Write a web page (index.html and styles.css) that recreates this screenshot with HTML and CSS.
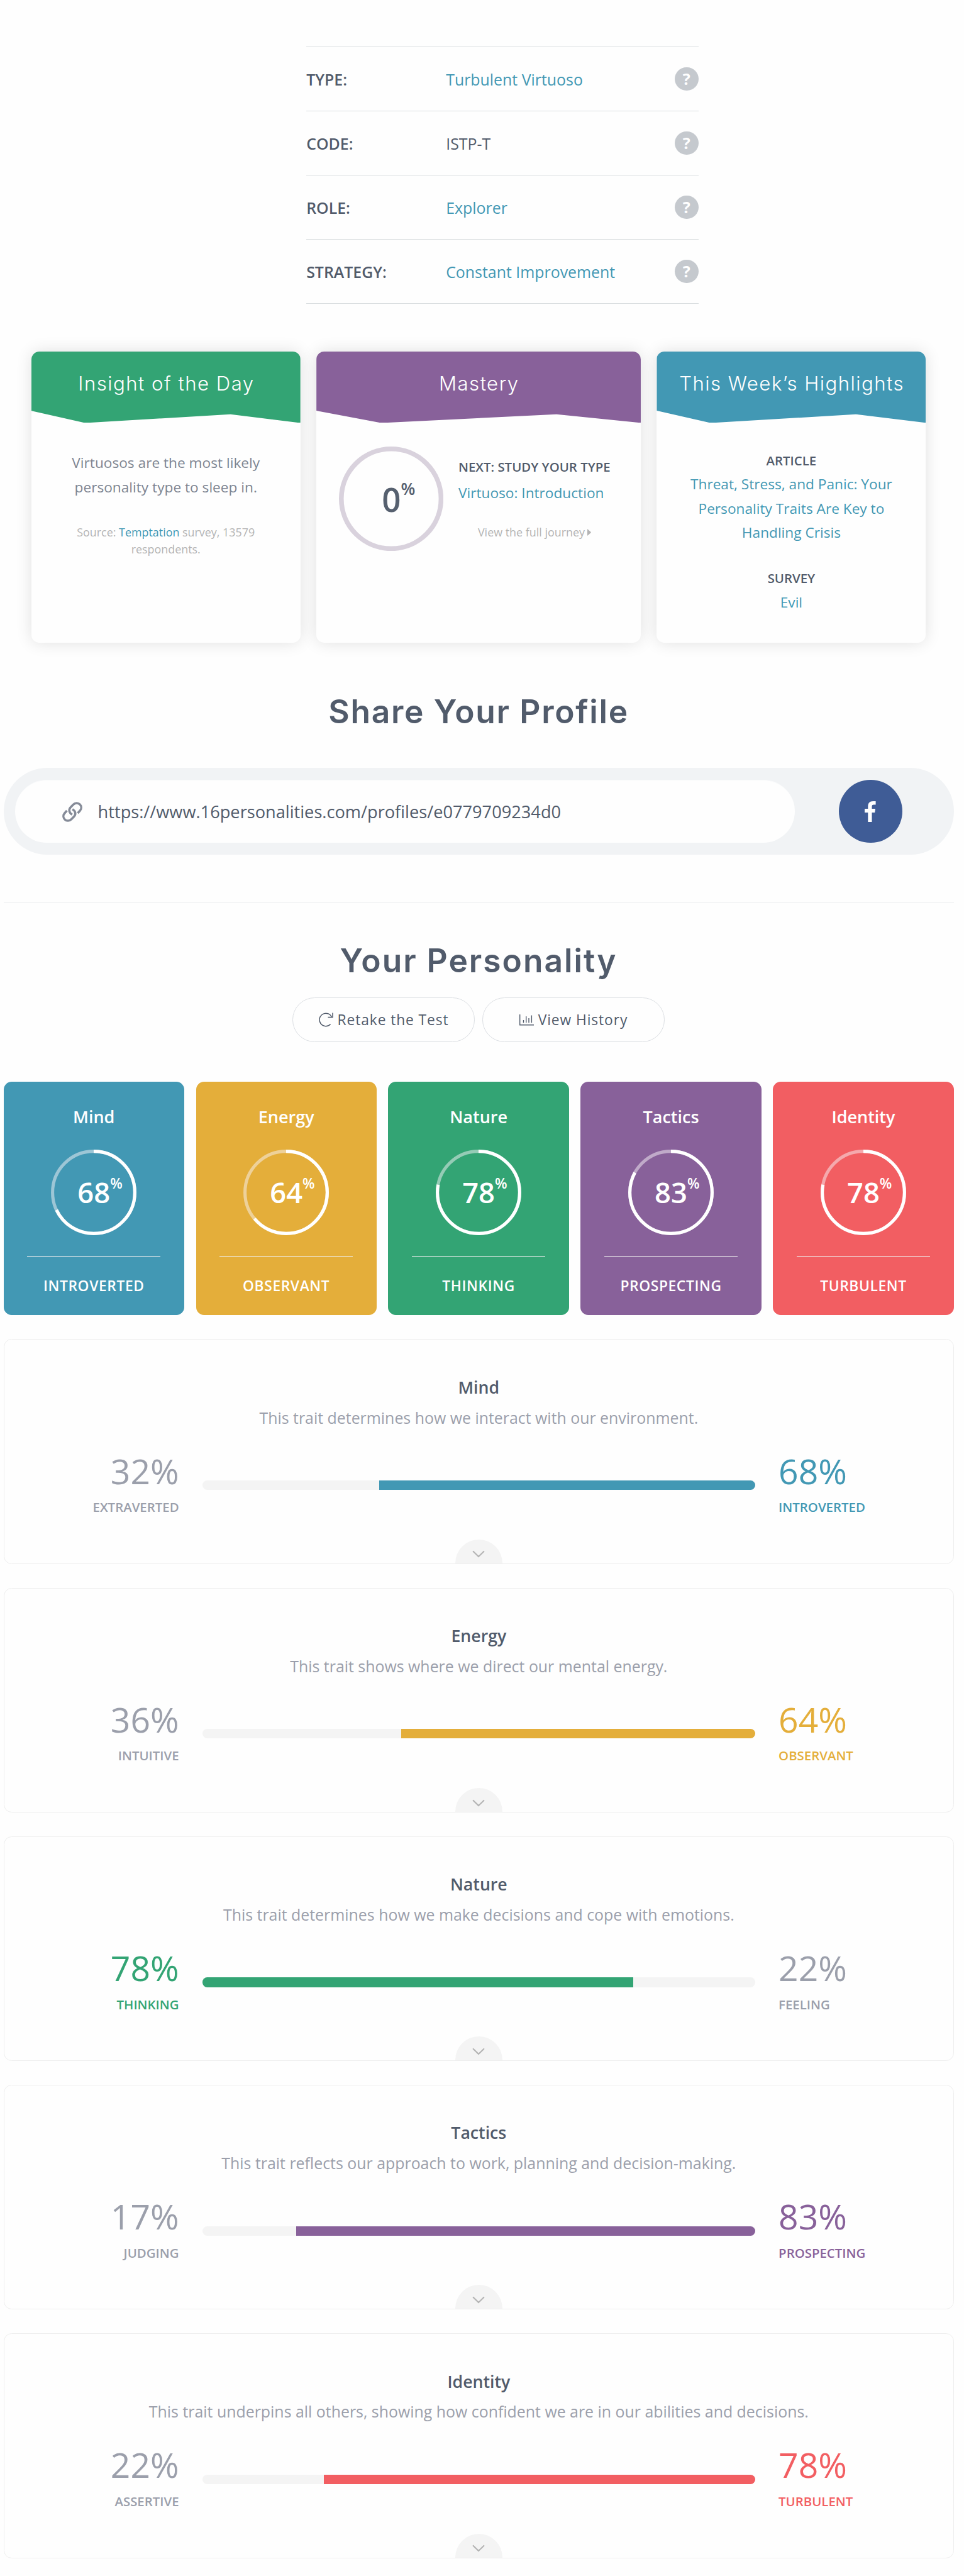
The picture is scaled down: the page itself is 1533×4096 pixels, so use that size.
FILE: index.html
```html
<!DOCTYPE html>
<html lang="en">
<head>
<meta charset="utf-8">
<title>Your Profile</title>
<link rel="stylesheet" href="styles.css">
</head>
<body>
<main class="page">
  <dl class="facts">
    <div class="fact"><dt>TYPE:</dt><dd><a>Turbulent Virtuoso</a></dd><span class="help">?</span></div>
    <div class="fact"><dt>CODE:</dt><dd>ISTP-T</dd><span class="help">?</span></div>
    <div class="fact"><dt>ROLE:</dt><dd><a>Explorer</a></dd><span class="help">?</span></div>
    <div class="fact"><dt>STRATEGY:</dt><dd><a>Constant Improvement</a></dd><span class="help">?</span></div>
  </dl>

  <section class="cards">
    <article class="card">
      <h3 class="card-head green">Insight of the Day</h3>
      <div class="card-body insight">
        <p class="lead">Virtuosos are the most likely<br>personality type to sleep in.</p>
        <p class="note">Source: <a>Temptation</a> survey, 13579<br>respondents.</p>
      </div>
    </article>
    <article class="card">
      <h3 class="card-head purple">Mastery</h3>
      <div class="card-body mastery">
        <div class="ring ring-lg">
          <svg viewBox="0 0 166 166"><circle cx="83" cy="83" r="79.2" fill="none" stroke="#d9d2dd" stroke-width="7.6"/></svg>
          <span class="num">0<sup>%</sup></span>
        </div>
        <div class="next">
          <h4>NEXT: STUDY YOUR TYPE</h4>
          <p class="lead"><a>Virtuoso: Introduction</a></p>
          <p class="note">View the full journey<svg class="caret" viewBox="0 0 6 11"><path d="M0 .6Q0 0 .6.4L5.7 5Q6 5.5 5.7 6L.6 10.6Q0 11 0 10.4Z" fill="#b4b4b4"/></svg></p>
        </div>
      </div>
    </article>
    <article class="card">
      <h3 class="card-head blue">This Week’s Highlights</h3>
      <div class="card-body highlights">
        <h4>ARTICLE</h4>
        <p class="lead"><a>Threat, Stress, and Panic: Your<br>Personality Traits Are Key to<br>Handling Crisis</a></p>
        <h4 class="second">SURVEY</h4>
        <p class="lead"><a>Evil</a></p>
      </div>
    </article>
  </section>

  <h2 class="title share-title">Share Your Profile</h2>
  <div class="share">
    <div class="share-url">
      <svg class="link-icon" viewBox="0 0 32 32" fill="none" stroke="#858b98" stroke-width="3.5"><path d="M15.800 20.200C10.500 17.200 10 12 13.200 8.700L17.600 4.200C20.600 1.200 25.200 1.200 28 4C30.800 6.800 30.900 11 28.200 14L24.600 18"/><path d="M16.200 11.800C21.500 14.800 22 20 18.800 23.300L14.400 27.800C11.400 30.800 6.800 30.800 4 28C1.200 25.200 1.100 21 3.800 18L7.400 14"/></svg>
      <span class="url">https://www.16personalities.com/profiles/e0779709234d0</span>
    </div>
    <a class="fb"><svg viewBox="0 0 18 33" fill="#fff"><path d="M5.300 33V17.900H0V12.100H5.300V8.200C5.300 2.700 8.200 0 13.300 0H17.600V5.500H14.600C12.300 5.500 11.500 6.600 11.500 8.700V12.100H17L16.200 17.900H11.500V33Z"/></svg></a>
  </div>
  <hr class="rule">

  <h2 class="title your-title">Your Personality</h2>
  <div class="buttons">
    <a class="btn"><svg class="i-retake" viewBox="0 0 23 23" fill="none" stroke="#515b6b" stroke-width="1.500"><path d="M18.600 18.500A10.200 10.200 0 1 1 20.700 7.700"/><path d="M22 .500V7.500H14.500"/></svg><span>Retake the Test</span></a>
    <a class="btn"><svg class="i-chart" viewBox="0 0 23 18" fill="none" stroke="#515b6b" stroke-width="1.400"><path d="M.700 0V16.800H23M6.500 13.200V9M10.700 13.200V3M15 13.200V6M19.400 13.200V1.500"/></svg><span>View History</span></a>
  </div>

  <section class="traits">
    <div class="trait blue"><h3>Mind</h3>
      <div class="ring"><svg viewBox="0 0 136 136"><circle class="track" cx="68" cy="68" r="65.400"/><circle class="arc" cx="68" cy="68" r="65.400" pathLength="100" stroke-dasharray="68 100"/></svg><span class="num">68<sup>%</sup></span></div>
      <p>INTROVERTED</p></div>
    <div class="trait yellow"><h3>Energy</h3>
      <div class="ring"><svg viewBox="0 0 136 136"><circle class="track" cx="68" cy="68" r="65.400"/><circle class="arc" cx="68" cy="68" r="65.400" pathLength="100" stroke-dasharray="64 100"/></svg><span class="num">64<sup>%</sup></span></div>
      <p>OBSERVANT</p></div>
    <div class="trait green"><h3>Nature</h3>
      <div class="ring"><svg viewBox="0 0 136 136"><circle class="track" cx="68" cy="68" r="65.400"/><circle class="arc" cx="68" cy="68" r="65.400" pathLength="100" stroke-dasharray="78 100"/></svg><span class="num">78<sup>%</sup></span></div>
      <p>THINKING</p></div>
    <div class="trait purple"><h3>Tactics</h3>
      <div class="ring"><svg viewBox="0 0 136 136"><circle class="track" cx="68" cy="68" r="65.400"/><circle class="arc" cx="68" cy="68" r="65.400" pathLength="100" stroke-dasharray="83 100"/></svg><span class="num">83<sup>%</sup></span></div>
      <p>PROSPECTING</p></div>
    <div class="trait red"><h3>Identity</h3>
      <div class="ring"><svg viewBox="0 0 136 136"><circle class="track" cx="68" cy="68" r="65.400"/><circle class="arc" cx="68" cy="68" r="65.400" pathLength="100" stroke-dasharray="78 100"/></svg><span class="num">78<sup>%</sup></span></div>
      <p>TURBULENT</p></div>
  </section>

  <section class="boxes">
    <article class="box">
      <h3>Mind</h3><p class="desc">This trait determines how we interact with our environment.</p>
      <div class="scale">
        <div class="side left"><b>32%</b><span>EXTRAVERTED</span></div>
        <div class="bar to-right"><i class="blue" style="width:68%"></i></div>
        <div class="side t-blue"><b>68%</b><span>INTROVERTED</span></div>
      </div>
      <div class="more"><svg viewBox="0 0 20 12"><path d="M1.700 1.900L10 10.100L18.300 1.900"/></svg></div>
    </article>
    <article class="box">
      <h3>Energy</h3><p class="desc">This trait shows where we direct our mental energy.</p>
      <div class="scale">
        <div class="side left"><b>36%</b><span>INTUITIVE</span></div>
        <div class="bar to-right"><i class="yellow" style="width:64%"></i></div>
        <div class="side t-yellow"><b>64%</b><span>OBSERVANT</span></div>
      </div>
      <div class="more"><svg viewBox="0 0 20 12"><path d="M1.700 1.900L10 10.100L18.300 1.900"/></svg></div>
    </article>
    <article class="box">
      <h3>Nature</h3><p class="desc">This trait determines how we make decisions and cope with emotions.</p>
      <div class="scale">
        <div class="side left t-green"><b>78%</b><span>THINKING</span></div>
        <div class="bar"><i class="green" style="width:78%"></i></div>
        <div class="side"><b>22%</b><span>FEELING</span></div>
      </div>
      <div class="more"><svg viewBox="0 0 20 12"><path d="M1.700 1.900L10 10.100L18.300 1.900"/></svg></div>
    </article>
    <article class="box">
      <h3>Tactics</h3><p class="desc">This trait reflects our approach to work, planning and decision-making.</p>
      <div class="scale">
        <div class="side left"><b>17%</b><span>JUDGING</span></div>
        <div class="bar to-right"><i class="purple" style="width:83%"></i></div>
        <div class="side t-purple"><b>83%</b><span>PROSPECTING</span></div>
      </div>
      <div class="more"><svg viewBox="0 0 20 12"><path d="M1.700 1.900L10 10.100L18.300 1.900"/></svg></div>
    </article>
    <article class="box">
      <h3>Identity</h3><p class="desc">This trait underpins all others, showing how confident we are in our abilities and decisions.</p>
      <div class="scale">
        <div class="side left"><b>22%</b><span>ASSERTIVE</span></div>
        <div class="bar to-right"><i class="red" style="width:78%"></i></div>
        <div class="side t-red"><b>78%</b><span>TURBULENT</span></div>
      </div>
      <div class="more"><svg viewBox="0 0 20 12"><path d="M1.700 1.900L10 10.100L18.300 1.900"/></svg></div>
    </article>
  </section>
</main>
</body>
</html>
```
FILE: styles.css
```css
* { box-sizing: border-box; margin: 0; padding: 0; }
body { background: #fefefe; color: #515b6b; font-family: "Open Sans", "Noto Sans", sans-serif; }
svg { display: block; }
a { color: #4298b4; }
.page { width: 1533px; height: 4096px; padding: 74px 16.400px 0 5.600px; overflow: hidden; }

.blue { background: #4298b4; }
.yellow { background: #e4ae3a; }
.green { background: #33a474; }
.purple { background: #88619a; }
.red { background: #f25e62; }

.facts { width: 623.500px; margin: 0 auto 76px 481.600px; border-top: 1px solid #d8dcde; font-size: 24.900px; }
.fact { display: flex; align-items: center; height: 102px; border-bottom: 1px solid #d8dcde; }
.fact dt { width: 222px; font-weight: 600; }
.fact dd { flex: 1; }
.help { width: 37.800px; height: 37.800px; border-radius: 50%; background: #c5c9ce; color: #fff; font-weight: 700; font-size: 25.200px; line-height: 37.800px; text-align: center; }

.cards { display: grid; grid-template-columns: 427.900px 515.800px 427.900px; gap: 25.500px; height: 462.500px; margin-left: 44.200px; }
.card { border-radius: 12.500px; background: #fefefe; overflow: hidden; box-shadow: 0 0 26px rgba(0, 0, 0, .12); text-align: center; white-space: nowrap; }
.card-head { height: 113.400px; clip-path: polygon(0 0, 100% 0, 100% 100%, 74% 88%, 20% 100%, 0 83%); color: #fff; font: 300 31.200px/102.200px Inter, "Open Sans", sans-serif; letter-spacing: 1.450px; text-indent: 1.450px; }
.lead { font-size: 22.660px; line-height: 38.500px; }
.note { font-size: 17.900px; line-height: 27.600px; color: #b4b4b4; }
.card h4 { font-size: 20.400px; line-height: 38.500px; font-weight: 600; }
.insight { padding-top: 45px; }
.insight .lead { color: #7d8592; }
.insight .note { margin-top: 38.400px; }
.mastery { display: flex; gap: 23.500px; padding: 37.600px 0 0 36.100px; }
.next { width: 242px; padding-top: 12.900px; text-align: left; }
.next .lead { margin-top: 4px; }
.next .note { display: flex; align-items: center; justify-content: center; gap: 4px; margin-top: 29px; }
.caret { width: 6px; height: 11px; }
.highlights { padding-top: 40.500px; }
.highlights .second { margin-top: 33.500px; }

.ring { display: grid; place-items: center; width: 136px; height: 136px; font-size: 45.300px; font-weight: 600; }
.ring > * { grid-area: 1 / 1; }
.ring svg { width: 100%; height: 100%; }
.ring-lg { width: 166.200px; height: 166.200px; font-size: 52.900px; color: #56606f; }
.num { position: relative; line-height: 1; }
.num sup { position: absolute; left: 100%; top: -.09em; font-size: .5em; line-height: 1; }
.track { fill: none; stroke: rgba(248, 243, 248, .5); stroke-width: 5.100; }
.arc { fill: none; stroke: #fff; stroke-width: 5.100; transform: rotate(-90deg); transform-origin: center; }

.title { font: 600 51.500px/60px Inter, "Open Sans", sans-serif; text-align: center; color: #515b6b; }
.share-title { margin-top: 79.500px; letter-spacing: 1.700px; }
.your-title { margin-top: 60.800px; letter-spacing: 2px; }
.share { display: flex; align-items: center; height: 138.200px; margin-top: 60px; padding-left: 18.600px; border-radius: 70px; background: #f1f3f5; }
.share-url { display: flex; align-items: center; width: 1240.100px; height: 100.600px; padding-left: 74.400px; border-top: 1px solid #f8f9fa; border-radius: 51px; background: #fefefe; }
.link-icon { width: 32px; height: 32px; }
.url { margin-left: 25px; font-size: 27.200px; white-space: nowrap; }
.fb { display: grid; place-items: center; width: 100.800px; height: 100.800px; margin-left: 69.600px; border-radius: 50%; background: #3f5c96; }
.fb svg { width: 18px; height: 33px; }
.rule { height: 1px; margin-top: 76px; border: 0; background: #ebedee; }

.buttons { display: flex; justify-content: center; gap: 12.300px; margin-top: 29.100px; }
.btn { display: flex; align-items: center; justify-content: center; width: 289.700px; height: 71.200px; border: 1.300px solid #dcdfe3; border-radius: 36px; color: #515b6b; font-size: 22.800px; letter-spacing: .9px; gap: 6.800px; white-space: nowrap; }
.i-retake { width: 23px; height: 23px; margin-top: -1px; }
.i-chart { width: 23px; height: 18px; }

.traits { display: grid; grid-template-columns: repeat(5, 1fr); gap: 18.600px; height: 371px; margin-top: 63px; }
.trait { display: flex; flex-direction: column; align-items: center; padding: 36.800px 37.700px 0; border-radius: 12.500px; color: #fff; }
.trait h3 { margin-bottom: 32.700px; font-size: 27px; line-height: 38px; font-weight: 600; }
.trait p { width: 100%; margin-top: 32.800px; padding-top: 32.400px; border-top: 1px solid #eee; font-size: 22.800px; line-height: 30px; font-weight: 600; text-align: center; letter-spacing: .6px; }

.boxes { display: grid; gap: 37.800px; margin-top: 38.200px; }
.box { display: flex; flex-direction: column; align-items: center; height: 357.400px; padding-top: 56.400px; border: 1px solid #eee; border-radius: 12.500px; }
.box h3 { font-size: 26.700px; line-height: 38px; font-weight: 600; }
.desc { margin-top: 9.900px; color: #9b9fab; font-size: 24.900px; line-height: 38px; white-space: nowrap; }
.scale { display: grid; grid-template-columns: 278px 878.500px 278px; gap: 37.500px; margin-top: 36px; }
.side { color: #9b9fab; }
.t-blue { color: #4298b4; }
.t-yellow { color: #e4ae3a; }
.t-green { color: #33a474; }
.t-purple { color: #88619a; }
.t-red { color: #f25e62; }
.left { text-align: right; }
.side b, .side span { display: block; }
.side b { font-size: 55.200px; line-height: 60px; font-weight: 400; }
.side span { margin-top: 12.500px; font-size: 20.400px; line-height: 30px; font-weight: 600; }
.bar { display: flex; height: 15.200px; margin-top: 45.300px; border-radius: 7.600px; background: #f4f4f4; overflow: hidden; }
.to-right { justify-content: flex-end; }
.more { display: flex; justify-content: center; width: 75.200px; height: 38px; margin-top: auto; padding-top: 17.500px; border-radius: 38px 38px 0 0; background: #f4f4f4; }
.more svg { width: 20px; height: 12px; fill: none; stroke: #b3b3b3; stroke-width: 2.100; stroke-linecap: round; }
```
